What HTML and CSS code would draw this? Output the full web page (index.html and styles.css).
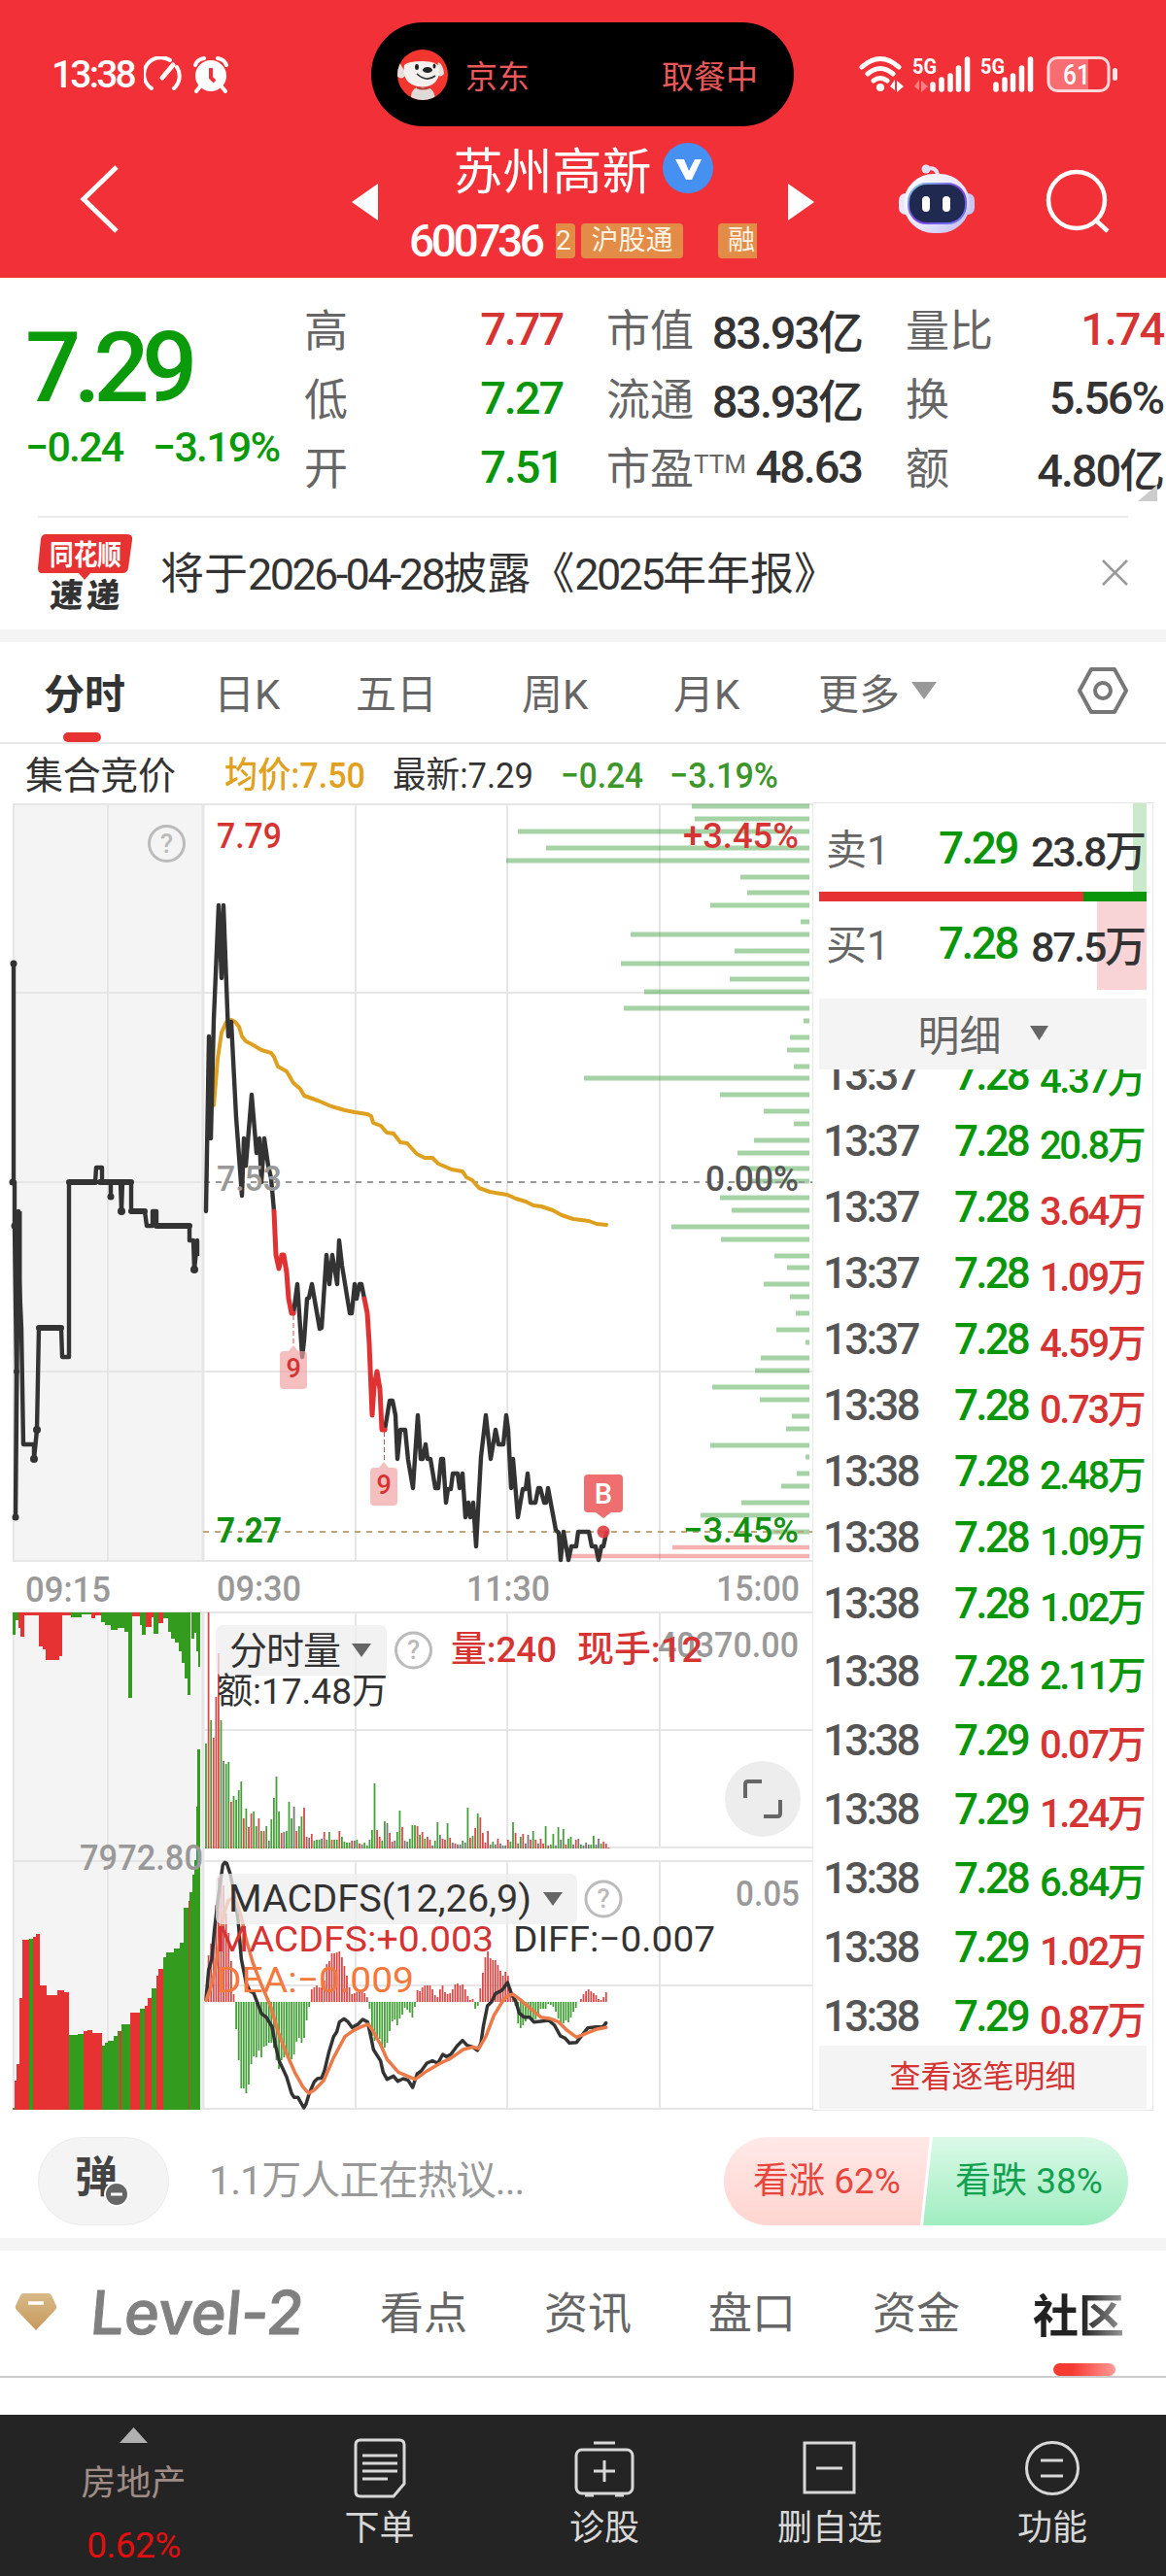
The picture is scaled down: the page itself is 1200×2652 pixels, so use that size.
FILE: index.html
```html
<!DOCTYPE html>
<html lang="zh-CN">
	<head>
		<meta charset="utf-8">
		<title>苏州高新 600736</title>
		<link rel="stylesheet" href="styles.css">
	</head>
	<body>
		<div class="header">
			<div class="status">
				<div class="status_left">
					<span class="clock">13:38</span>
					<svg width="40" height="38" viewBox="0 0 40 38" fill="none" stroke="#fff" stroke-width="4" stroke-linecap="round">
						<path d="M8 33A17 17 0 0 1 27 4M34 11a17 17 0 0 1-3 22"/>
						<path d="M19 22L30 9" stroke-width="5"/>
					</svg>
					<svg width="38" height="38" viewBox="0 0 38 38">
						<circle cx="19" cy="20" r="16" fill="#fff"/>
						<path d="M3 9q2-6 9-7M35 9q-2-6-9-7M8 31l-4 5M30 31l4 5" stroke="#fff" stroke-width="4" fill="none" stroke-linecap="round"/>
						<path d="M19 12v10l4 4" stroke="#f23038" stroke-width="4" fill="none"/>
					</svg>
				</div>
				<div class="island">
					<svg width="52" height="52" viewBox="0 0 52 52">
						<defs><clipPath id="face"><circle cx="26" cy="26" r="26"/></clipPath></defs>
						<g clip-path="url(#face)">
							<rect width="52" height="52" fill="#f2352f"/>
							<path d="M14 52q-1-10 6-13h12q8 4 6 13z" fill="#dedad6"/>
							<path d="M2 13q-5 6-2 15q6 4 9-3zM42 13q5 2 6 12q-4 5-8 0z" fill="#e5e0dc"/>
							<path d="M7 16q4-4 19-4q15 0 17 7q1 12-7 17q-10 5-21 0Q5 31 7 16z" fill="#f3f0ed"/>
							<path d="M20 39q6 3 13 0" stroke="#b33b33" stroke-width="2" fill="none"/>
							<ellipse cx="20" cy="18" rx="2" ry="3" fill="#222"/>
							<ellipse cx="38" cy="17" rx="1.5" ry="2.5" fill="#222"/>
							<ellipse cx="31" cy="21" rx="5" ry="3" fill="#222"/>
							<path d="M20 25q10 9 19 2" stroke="#333" stroke-width="1.6" fill="none"/>
						</g>
					</svg>
					<span>京东</span>
					<span class="island_right">取餐中</span>
				</div>
				<svg class="signal" width="270" height="40" viewBox="882 56 270 40">
					<g fill="none" stroke="#fff" stroke-width="5" stroke-linecap="round">
						<path d="M887 69q19-17 38 0M893 76q13-11 26 0M899 83q7-5 14 0"/>
					</g>
					<circle cx="906" cy="90" r="4" fill="#fff"/>
					<path d="M916 89l5-7v11zM923 83l7 6-7 6z" fill="#fff"/>
					<path d="M941 89l5-7v11zM948 83l7 6-7 6z" fill="#ff7f83"/>
					<g stroke="#fff" stroke-width="5.5" stroke-linecap="round">
						<path d="M960 87v5M969 82v10M978 78v14M986.500 70v22M995.500 61v31"/>
						<path d="M1025 87v5M1034 82v10M1042.500 78v14M1051.500 70v22M1060.500 61v31"/>
					</g>
					<g fill="#fff" font-family="Roboto" font-weight="700" font-size="22">
						<text x="939" y="76" textLength="25" lengthAdjust="spacingAndGlyphs">5G</text>
						<text x="1009" y="76" textLength="25" lengthAdjust="spacingAndGlyphs">5G</text>
					</g>
					<path d="M1079 67q0-8 8-8h33v35h-33q-8 0-8-8z" fill="#f76d72"/>
					<rect x="1079" y="59.500" width="62" height="34" rx="9" fill="none" stroke="#ffd9da" stroke-width="3"/>
					<rect x="1145" y="70" width="5" height="13" rx="2.500" fill="#ffe5e6"/>
					<text x="1094" y="87" fill="#fff" font-family="Roboto" font-weight="500" font-size="29" textLength="28" lengthAdjust="spacingAndGlyphs">61</text>
				</svg>
			</div>
			<div class="nav">
				<svg class="back" width="44" height="72" viewBox="0 0 44 72"><path d="M40 3L6 36L40 69" fill="none" stroke="#fff" stroke-width="5"/></svg>
				<svg width="27" height="38" viewBox="0 0 27 38"><path d="M27 0v38L0 19z" fill="#fff"/></svg>
				<div class="stock">
					<div class="stock_name">苏州高新
						<svg width="52" height="52" viewBox="0 0 52 52"><circle cx="26" cy="26" r="26" fill="#4590f0"/><path d="M13 17h9l5 12l6-12h7L30 38h-6z" fill="#fff"/></svg>
					</div>
					<div class="stock_code">
						<span class="code">600736</span>
						<span class="tags"><i class="cut">2</i><i>沪股通</i><i class="last">融</i></span>
					</div>
				</div>
				<svg width="27" height="38" viewBox="0 0 27 38"><path d="M0 0v38L27 19z" fill="#fff"/></svg>
				<svg class="robot" width="80" height="74" viewBox="0 0 80 74">
					<defs>
						<linearGradient id="shell" x1="0" y1="0" x2="1" y2="1"><stop offset="0" stop-color="#fff"/><stop offset=".6" stop-color="#e6e2fb"/><stop offset="1" stop-color="#b9b6ee"/></linearGradient>
						<linearGradient id="rim" x1="0" y1="0" x2="1" y2="1"><stop offset="0" stop-color="#7fd8e8"/><stop offset=".5" stop-color="#7a3fe0"/><stop offset="1" stop-color="#6a7cf0"/></linearGradient>
					</defs>
					<rect x="1" y="31" width="16" height="22" rx="7" fill="#e9e6fa"/>
					<rect x="63" y="31" width="16" height="22" rx="7" fill="#c9c6f2"/>
					<path d="M29 6q12-3 12 8" fill="none" stroke="#e6e2fb" stroke-width="4"/>
					<circle cx="29" cy="6" r="4.500" fill="#dfe0fa"/>
					<rect x="6" y="11" width="68" height="61" rx="31" fill="url(#shell)"/>
					<rect x="11" y="21" width="59" height="41" rx="19" fill="#20294f" stroke="url(#rim)" stroke-width="2"/>
					<rect x="25" y="34" width="8" height="16" rx="4" fill="#fff"/>
					<rect x="46" y="34" width="8" height="16" rx="4" fill="#fff"/>
				</svg>
				<svg class="search" width="66" height="66" viewBox="0 0 66 66" fill="none" stroke="#fff" stroke-width="4.500"><circle cx="32" cy="32" r="29"/><path d="M52 53l12 11"/></svg>
			</div>
		</div>

		<div class="quote">
			<div class="price_box">
				<div class="price">7.29</div>
				<div class="change"><span>−0.24</span><span>−3.19%</span></div>
			</div>
			<ul class="stats">
				<li><b>高</b><em class="red">7.77</em></li>
				<li><b>市值</b><em>83.93亿</em></li>
				<li><b>量比</b><em class="red">1.74</em></li>
				<li><b>低</b><em class="green">7.27</em></li>
				<li><b>流通</b><em>83.93亿</em></li>
				<li><b>换</b><em>5.56%</em></li>
				<li><b>开</b><em class="green">7.51</em></li>
				<li><b>市盈<sup>TTM</sup></b><em>48.63</em></li>
				<li><b>额</b><em>4.80亿</em></li>
			</ul>
		</div>

		<div class="notice">
			<svg width="98" height="80" viewBox="0 0 98 80">
				<path d="M8 0h84q6 0 5 6l-4 29q-1 5-6 5H54l-6 7-6-7H4q-4 0-4-5L3 5q1-5 5-5z" fill="#e63232"/>
				<text x="12" y="32" fill="#fff" font-family="Noto Sans CJK SC" font-weight="700" font-size="29" textLength="74" lengthAdjust="spacingAndGlyphs">同花顺</text>
				<text x="14" y="75" fill="#333" font-family="Noto Sans CJK SC" font-weight="900" font-size="34" textLength="72" transform="skewX(-4) translate(3 0)">速递</text>
			</svg>
			<p>将于<span>2026-04-28</span>披露《<span>2025</span>年年报》</p>
			<svg width="27" height="27" viewBox="0 0 27 27"><path d="M1 1l25 25M26 1L1 26" stroke="#999" stroke-width="2.500"/></svg>
		</div>

		<ul class="period">
			<li class="on">分时</li>
			<li>日K</li>
			<li>五日</li>
			<li>周K</li>
			<li>月K</li>
			<li>更多<svg width="26" height="18" viewBox="0 0 26 18"><path d="M0 0h26L13 18z" fill="#999"/></svg></li>
			<li class="setting"><svg width="54" height="50" viewBox="0 0 54 50" fill="none" stroke="#777" stroke-width="4"><path d="M15 3h24l12 22l-12 22H15L3 25z" stroke-linejoin="round"/><circle cx="27" cy="25" r="8"/></svg></li>
		</ul>

		<div class="main">
			<!-- all charts share the page x axis, y starts at 766 -->
			<svg class="charts" width="836" height="1416" viewBox="0 766 836 1416">
				<g font-size="37">
					<text x="26" y="812" textLength="155" font-size="39">集合竞价</text>
					<text x="231" y="811" textLength="145" lengthAdjust="spacingAndGlyphs" font-weight="500" fill="#e0a020">均价:7.50</text>
					<text x="404" y="811" textLength="145" lengthAdjust="spacingAndGlyphs">最新:7.29</text>
					<text x="577" y="811" textLength="85" lengthAdjust="spacingAndGlyphs" font-weight="500" fill="#3c962a">−0.24</text>
					<text x="689" y="811" textLength="112" lengthAdjust="spacingAndGlyphs" font-weight="500" fill="#3c962a">−3.19%</text>
				</g>

				<path d="M14 828h196v780H14zM14 1661h196v511H14z" fill="#f4f4f4"/>
				<g fill="none" stroke="#e6e6e6" stroke-width="2">
					<path d="M14 828H836M14 1607H836M14 827V1608M111 827V1608M366 827V1608M522 827V1608M679 827V1608M14 1022H836M14 1412H836M14 1217H210"/>
					<path d="M14 1660H836M210 1781H836M210 1902H836M14 1916H836M210 2044H836M14 2171H836M14 1660V2172M111 1660V2172"/>
					<path d="M366 1660V1902M522 1660V1902M679 1660V1902M366 1916V2172M522 1916V2172M679 1916V2172"/>
					<path d="M209 827V1608M209 1660V2172" stroke-width="3"/>
				</g>

				<path id="dist_green" fill="none" stroke="#3c9f3c" stroke-opacity=".46" stroke-width="5"/>
				<path d="M692 1593H833M583 1602H833" stroke="#e63232" stroke-opacity=".38" stroke-width="4.500"/>

				<path d="M210 1217H836" stroke="#999" stroke-width="2" stroke-dasharray="6 6"/>
				<path d="M209 1577H836" stroke="#bfa77a" stroke-width="2" stroke-dasharray="6 6"/>

				<!-- call auction -->
				<path class="auction" d="M14 992V1217H15V1262L17 1412L16 1562L19 1247V1300L22 1367L24 1487H35V1502L38 1472L40 1367H63L64 1397H71V1217H98L99 1202H105V1217H114V1232V1217H124L125 1247L126 1217H135V1247H149L151 1262H157V1247H161V1262H195V1277H199L200 1307L203 1277V1293"/>
				<path d="M71 1217H98M103 1217H135M40 1367H63M135 1247H149M161 1262H195" stroke="#333" stroke-width="6" stroke-linecap="round"/>
				<path d="M19 1247V1367" stroke="#333" stroke-width="7"/>
				<g fill="#333"><circle cx="14" cy="992" r="3.500"/><circle cx="13" cy="1217" r="3.500"/><circle cx="15" cy="1262" r="3.500"/><circle cx="17" cy="1412" r="3"/><circle cx="16" cy="1562" r="3.500"/><circle cx="35" cy="1502" r="4"/><circle cx="38" cy="1472" r="4"/><circle cx="114" cy="1232" r="3.500"/><circle cx="125" cy="1247" r="4"/><circle cx="200" cy="1307" r="4"/></g>

				<path class="line avg" d="M220 1138L224 1090L228 1063L233 1052L238 1050L242 1052L246 1057L249 1067L253 1072L259 1075L269 1081L279 1084L282 1088L286 1098L295 1103L302 1115L309 1121L313 1128L327 1133L341 1139L355 1143L365 1145L378 1147L382 1149L384 1156L392 1159L398 1166L405 1167L412 1176L419 1177L429 1188L437 1192L445 1192L451 1198L465 1204L476 1206L480 1212L486 1215L493 1223L504 1227L522 1230L531 1234L541 1237L549 1241L557 1242L569 1246L578 1251L590 1255L606 1257L614 1260L624 1261"/>
				<path class="line" d="M212 1247L215 1067L217 1172L220 1050L225 932L228 1007L230 932L235 1067L238 1052L243 1150L249 1231L251 1172L253 1200L259 1127L264 1187L267 1172L269 1217L272 1172L276 1200L279 1213L282 1247M302 1352L306 1322L311 1397L313 1380L316 1337L318 1336L321 1322L329 1368L331 1367L336 1292L339 1322L342 1292L347 1322L349 1277L352 1303L360 1352H362L365 1322L367 1337L370 1322H372L375 1337M396 1472L401 1442H404L407 1457L409 1502L412 1472H417L420 1503L425 1532L430 1457L433 1502H435L438 1487L440 1502H443L448 1532H451L454 1502H456L459 1547L461 1533H464L466 1517H471L473 1532L476 1517L479 1562L482 1547L484 1562L487 1547L490 1592L495 1500L500 1457L505 1502L510 1472L513 1487H518L521 1457L523 1472L526 1532L528 1502L533 1562L538 1533H541L543 1517L546 1547H551L554 1532H556L560 1547H562L564 1532L572 1575L575 1578L577 1606L580 1577L585 1606L588 1592H593L595 1577H606L609 1592H613L616 1606L619 1592H621L624 1578"/>
				<path class="line fall" d="M282 1247L284 1292L287 1306L290 1292H292L295 1310L297 1337L300 1352H302M375 1337L378 1352L380 1383L383 1457L385 1427L388 1412L391 1430L393 1472H396"/>

				<path d="M302 1354V1386M395.500 1474V1506" stroke="#c0545a" stroke-width="1" stroke-dasharray="5 3"/>
				<g fill="#f0a0a2" fill-opacity=".68">
					<path d="M302 1385l5 6h5q4 0 4 4v31q0 4-4 4h-20q-4 0-4-4v-31q0-4 4-4h5z"/>
					<path d="M395 1505l5 6h5q4 0 4 4v31q0 4-4 4h-20q-4 0-4-4v-31q0-4 4-4h5z"/>
				</g>
				<g fill="#d63333" font-family="Roboto" font-weight="500" font-size="27"><text x="294.500" y="1418">9</text><text x="387.500" y="1538">9</text></g>
				<path d="M605 1518h32q4 0 4 4v31q0 4-4 4h-8l-8 6l-8-6h-8q-4 0-4-4v-31q0-4 4-4z" fill="#ef6e70"/>
				<text x="621" y="1548" text-anchor="middle" font-family="Roboto" font-weight="500" font-size="29" fill="#fff">B</text>
				<circle cx="621" cy="1577" r="6.500" fill="#e03c40" fill-opacity=".9"/>

				<g font-size="37">
					<text x="223" y="873" textLength="67" lengthAdjust="spacingAndGlyphs" font-weight="500" fill="#d63333">7.79</text>
					<text x="223" y="1226" textLength="67" lengthAdjust="spacingAndGlyphs" font-weight="500" fill="#999">7.53</text>
					<text x="223" y="1588" textLength="67" lengthAdjust="spacingAndGlyphs" font-weight="700" fill="#129012">7.27</text>
					<text x="703" y="873" textLength="119" lengthAdjust="spacingAndGlyphs" font-weight="500" fill="#d63333">+3.45%</text>
					<text x="726" y="1226" textLength="96" lengthAdjust="spacingAndGlyphs" font-weight="500" fill="#555">0.00%</text>
					<text x="703" y="1588" textLength="119" lengthAdjust="spacingAndGlyphs" font-weight="500" fill="#129012">−3.45%</text>
					<g fill="#999" font-weight="500">
						<text x="26" y="1649" textLength="88" lengthAdjust="spacingAndGlyphs">09:15</text>
						<text x="223" y="1648" textLength="87" lengthAdjust="spacingAndGlyphs">09:30</text>
						<text x="480" y="1648" textLength="86" lengthAdjust="spacingAndGlyphs">11:30</text>
						<text x="737" y="1648" textLength="86" lengthAdjust="spacingAndGlyphs">15:00</text>
					</g>
				</g>
				<g class="help"><circle cx="171.500" cy="868.500" r="18"/><text x="171.500" y="878">?</text></g>

				<!-- auction volume, left column -->
				<g id="auction_top"></g>
				<g id="auction_bottom"></g>
				<g font-size="37" font-weight="500" fill="#999">
					<text x="82" y="1925" textLength="127" lengthAdjust="spacingAndGlyphs">7972.80</text>
					<text x="677" y="1706" textLength="145" lengthAdjust="spacingAndGlyphs">40370.00</text>
					<text x="757" y="1962" textLength="66" lengthAdjust="spacingAndGlyphs">0.05</text>
				</g>

				<g id="volume" stroke-width="1.800"></g>
				<g id="macd" stroke-width="1.800"></g>
				<g transform="translate(200 1820) scale(.33333)" fill="none" stroke-width="10.5" stroke-linejoin="round" stroke-linecap="round">
					<path stroke="#333" d="M36 715L44 625L54 590L62 500L75 390L88 300L94 292L100 295L110 325L120 370L135 470L145 590L160 665L172 690L183 695L200 740L208 760L222 770L240 800L250 855L262 905L285 955L300 1005L308 1018H320L338 1050L345 1038L355 1005L370 970L380 960L393 958L402 935L415 880L430 830L440 815L448 785L462 775L475 785L487 802L505 792L520 777L535 785L545 830L553 870L575 905L583 940L595 962L615 952L628 968L645 960L660 965L674 987L688 945L700 937L718 912L735 905L752 912L767 885L778 892L792 885L812 858L828 842L842 857L860 862L874 873L885 850L892 800L905 735L918 722L930 697L950 687L967 663L980 700L992 720L1003 757L1018 770H1035L1048 785L1075 782L1095 780L1112 795L1130 828L1145 835L1158 850L1180 848L1192 832L1215 803L1240 800H1262L1271 788"/>
					<path stroke="#eb7a48" d="M36 718L50 680L65 620L80 520L92 450L105 410L118 403L130 415L145 460L160 530L180 600L205 665L235 735L260 820L290 895L310 940L335 985L353 1005L370 995L400 965L430 895L465 830L490 812L515 800L537 792L550 810L575 855L595 900L630 940L660 953L682 962L720 935L760 912L790 898L830 870L860 862L878 867L900 830L925 765L955 715L970 702L985 700L1005 715L1040 745L1070 770L1100 775L1125 785L1150 810L1180 832L1210 820L1240 808L1271 802"/>
				</g>

				<g fill="#ededed" fill-opacity=".75"><rect x="222" y="1673" width="176" height="52" rx="7"/><rect x="222" y="1929" width="372" height="52" rx="7"/></g>
				<path d="M362 1692h20l-10 14zM559 1948h20l-10 14z" fill="#666"/>
				<g class="help"><circle cx="425.500" cy="1699" r="18"/><text x="425.500" y="1708">?</text><circle cx="621" cy="1955" r="18"/><text x="621" y="1964">?</text></g>
				<g font-size="37">
					<text x="236" y="1713" font-size="39" textLength="115">分时量</text>
					<text x="464" y="1711" textLength="109" lengthAdjust="spacingAndGlyphs" font-weight="500" fill="#d63333">量:240</text>
					<text x="594" y="1711" textLength="129" lengthAdjust="spacingAndGlyphs" font-weight="500" fill="#d63333">现手:12</text>
					<text x="223" y="1754" textLength="176" lengthAdjust="spacingAndGlyphs">额:17.48万</text>
					<text x="235" y="1968" font-size="38" textLength="312" lengthAdjust="spacingAndGlyphs">MACDFS(12,26,9)</text>
					<text x="222" y="2009" textLength="286" lengthAdjust="spacingAndGlyphs" fill="#d63333">MACDFS:+0.003</text>
					<text x="528" y="2009" textLength="208" lengthAdjust="spacingAndGlyphs">DIFF:−0.007</text>
					<text x="223" y="2051" textLength="203" lengthAdjust="spacingAndGlyphs" fill="#f5783c">DEA:−0.009</text>
				</g>
				<circle cx="785" cy="1852" r="39" fill="#ededed"/>
				<path d="M784 1834h-14q-3 0-3 3v14M803 1853v14q0 3-3 3h-14" fill="none" stroke="#666" stroke-width="4"/>
			</svg>

			<div class="side">
				<div class="order sell"><b>卖1</b><em class="green">7.29</em><i>23.8万</i></div>
				<div class="ratio"><span></span></div>
				<div class="order buy"><b>买1</b><em class="green">7.28</em><i>87.5万</i></div>
				<div class="side_title">明细<svg width="19" height="15" viewBox="0 0 19 15"><path d="M0 0h19L9.500 15z" fill="#666"/></svg></div>
				<ul class="ticks">
					<li><b>13:37</b><em>7.28</em><i class="green">4.37万</i></li>
					<li><b>13:37</b><em>7.28</em><i class="green">20.8万</i></li>
					<li><b>13:37</b><em>7.28</em><i class="red">3.64万</i></li>
					<li><b>13:37</b><em>7.28</em><i class="red">1.09万</i></li>
					<li><b>13:37</b><em>7.28</em><i class="red">4.59万</i></li>
					<li><b>13:38</b><em>7.28</em><i class="red">0.73万</i></li>
					<li><b>13:38</b><em>7.28</em><i class="green">2.48万</i></li>
					<li><b>13:38</b><em>7.28</em><i class="green">1.09万</i></li>
					<li><b>13:38</b><em>7.28</em><i class="green">1.02万</i></li>
					<li class="tall"><b>13:38</b><em>7.28</em><i class="green">2.11万</i></li>
					<li class="tall"><b>13:38</b><em>7.29</em><i class="red">0.07万</i></li>
					<li class="tall"><b>13:38</b><em>7.29</em><i class="red">1.24万</i></li>
					<li class="tall"><b>13:38</b><em>7.28</em><i class="green">6.84万</i></li>
					<li class="tall"><b>13:38</b><em>7.29</em><i class="red">1.02万</i></li>
					<li class="tall"><b>13:38</b><em>7.29</em><i class="red">0.87万</i></li>
				</ul>
				<div class="side_more">查看逐笔明细</div>
			</div>
		</div>

		<div class="talk">
			<div class="barrage">弹<svg width="26" height="26" viewBox="0 0 26 26"><circle cx="13" cy="13" r="12" fill="#666" stroke="#fff" stroke-width="2"/><path d="M7 13h12" stroke="#fff" stroke-width="3"/></svg></div>
			<p>1.1万人正在热议...</p>
			<div class="vote">
				<span class="up">看涨 <i>62%</i></span>
				<span class="down">看跌 <i>38%</i></span>
			</div>
		</div>

		<div class="tabs">
			<svg class="gem" width="44" height="40" viewBox="0 0 44 40"><defs><linearGradient id="gold" x1="0" y1="0" x2="0" y2="1"><stop offset="0" stop-color="#d8b988"/><stop offset="1" stop-color="#c69a5c"/></linearGradient></defs><path d="M9 1h26q2 0 3 2l5 11q1 2-1 4L22 39L2 18q-2-2-1-4L6 3q1-2 3-2z" fill="url(#gold)"/><path d="M14 11h16" stroke="#fff" stroke-width="3.500"/></svg>
			<svg class="level" width="222" height="52" viewBox="0 0 222 52"><text x="-2" y="48" textLength="219" lengthAdjust="spacingAndGlyphs" font-family="Inter" font-weight="500" font-size="62" fill="#808080" stroke="#808080" stroke-width="1" transform="translate(5 0) skewX(-5)">Level-2</text></svg>
			<ul>
				<li>看点</li>
				<li>资讯</li>
				<li>盘口</li>
				<li>资金</li>
				<li class="on">社区</li>
			</ul>
		</div>

		<div class="footer">
			<div class="plate">
				<svg width="29" height="16" viewBox="0 0 29 16"><path d="M0 16h29L14.500 0z" fill="#b0b0b0"/></svg>
				<span>房地产</span>
				<b>0.62%</b>
			</div>
			<div class="menu">
				<svg width="56" height="62" viewBox="0 0 56 62"><path d="M8 2h40q5 0 5 5v40L42 60H8q-5 0-5-5V7q0-5 5-5z"/><path d="M10 18h36M10 26h36M10 34h36M10 42h26"/></svg>
				下单
			</div>
			<div class="menu">
				<svg width="62" height="62" viewBox="0 0 62 62"><rect x="2" y="12" width="58" height="45" rx="6"/><path d="M20 5h22M31 23v22M20 34h22M11 59h9M42 59h9"/></svg>
				诊股
			</div>
			<div class="menu">
				<svg width="56" height="62" viewBox="0 0 56 62"><rect x="2" y="5" width="51" height="51"/><path d="M14 31h27"/></svg>
				删自选
			</div>
			<div class="menu">
				<svg width="58" height="62" viewBox="0 0 58 62"><circle cx="29" cy="31" r="26.500"/><path d="M17 23h23M17 39h23"/></svg>
				功能
			</div>
		</div>
		<script src="chart.js"></script>
	</body>
</html>
```

FILE: styles.css
```css
*{
	margin: 0;
	padding: 0;
	box-sizing: border-box;
	list-style: none;
	font-style: normal;
}
body{
	width: 1200px;
	height: 2652px;
	overflow: hidden;
	background: #fff;
	color: #333;
	font-family: Roboto,"Noto Sans CJK SC",sans-serif;
}
svg{
	display: block;
	flex: none;
}
.red{
	color: #d63333 !important;
}
.green{
	color: #0a960a !important;
}

/* 头部 */
.header{
	height: 286px;
	background: #f23038;
	color: #fff;
}
.status{
	height: 130px;
	padding-top: 23px;
	display: flex;
}
.status_left{
	width: 382px;
	height: 108px;
	padding-left: 53px;
	display: flex;
	align-items: center;
}
.clock{
	width: 95px;
	font-size: 39px;
	font-weight: 500;
	letter-spacing: -2.8px;
}
.status_left svg{
	margin-right: 10px;
}
.island{
	width: 435px;
	height: 107px;
	padding: 0 37px 0 27px;
	border-radius: 54px;
	background: #000;
	color: #e9585a;
	font-size: 33px;
	display: flex;
	align-items: center;
}
.island span{
	margin-left: 18px;
}
.island .island_right{
	margin-left: auto;
}
.signal{
	margin: 33px 0 0 65px;
}
.nav{
	height: 156px;
	display: flex;
}
.nav>svg{
	margin-top: 59px;
}
.nav .back{
	margin: 39px 238px 0 80px;
}
.stock{
	width: 422px;
	padding-top: 15px;
}
.stock_name{
	height: 56px;
	display: flex;
	align-items: center;
	justify-content: center;
	gap: 11px;
	font-size: 51px;
	white-space: nowrap;
}
.stock_code{
	height: 36px;
	margin-top: 29px;
	padding-left: 32px;
	display: flex;
	align-items: center;
}
.code{
	width: 151px;
	font-size: 46px;
	font-weight: 500;
	letter-spacing: -3.4px;
}
.tags{
	width: 207px;
	height: 36px;
	overflow: hidden;
	display: flex;
}
.tags i{
	flex: none;
	width: 105px;
	height: 36px;
	margin-left: 6px;
	border-radius: 4px;
	background: #e38c47;
	color: #fff3e4;
	font-size: 28px;
	line-height: 35px;
	text-align: center;
}
.tags .cut{
	width: 20px;
	margin-left: 0;
	border-radius: 0 4px 4px 0;
	text-align: left;
}
.tags .last{
	width: 60px;
	margin-left: 36px;
	padding-left: 10px;
	text-align: left;
}
.nav .robot{
	margin: 38px 0 0 86px;
}
.nav .search{
	margin: 44px 0 0 72px;
}

/* 行情 */
.quote{
	height: 245px;
	padding-top: 17px;
	display: flex;
	position: relative;
}
.quote:after{
	content: "";
	position: absolute;
	right: 9px;
	top: 213px;
	border: solid transparent;
	border-width: 0 0 17px 20px;
	border-bottom-color: #ccc;
}
.price_box{
	width: 313px;
	padding-left: 26px;
	color: #0a9a0a;
}
.price{
	height: 130px;
	padding-top: 18px;
	font-size: 101px;
	font-weight: 500;
	line-height: 116px;
	letter-spacing: -7.6px;
}
.change{
	margin-top: -3px;
	font-size: 43px;
	font-weight: 500;
	letter-spacing: -1.8px;
	line-height: 60px;
	display: flex;
	white-space: nowrap;
}
.change span:first-child{
	width: 131px;
}
.stats{
	flex: 1;
	display: grid;
	grid-template-columns: 268px 265px 267px;
	grid-auto-rows: 71px;
	column-gap: 43px;
}
.stats li{
	display: flex;
	align-items: center;
	justify-content: space-between;
	white-space: nowrap;
}
.stats b{
	margin-top: -3px;
	font-weight: 400;
	font-size: 45px;
	color: #666;
}
.stats em{
	margin-right: 2px;
	font-size: 47px;
	font-weight: 500;
	letter-spacing: -2.1px;
}
.stats sup{
	font-size: 26px;
	vertical-align: 12px;
}

/* 公告 */
.notice{
	height: 130px;
	border-bottom: 13px solid #f4f4f4;
	padding: 0 39px;
	display: flex;
	align-items: center;
	position: relative;
}
.notice:before{
	content: "";
	position: absolute;
	left: 39px;
	right: 39px;
	top: 0;
	height: 2px;
	background: #ebebeb;
}
.notice p{
	flex: 1;
	margin-top: -4px;
	padding-left: 28px;
	font-size: 45px;
}
.notice p span{
	letter-spacing: -2.6px;
}

/* 周期 */
.period{
	height: 105px;
	padding: 0 0 3px 45px;
	border-bottom: 2px solid #e8e8e8;
	display: flex;
	align-items: center;
	color: #666;
	font-size: 42px;
}
.period li{
	position: relative;
	flex: none;
	width: 175px;
	display: flex;
	align-items: center;
}
.period li:nth-child(2){
	width: 146px;
}
.period li:nth-child(3){
	width: 171px;
}
.period li:nth-child(4){
	width: 156px;
}
.period li:nth-child(5){
	width: 149px;
}
.period li:nth-child(6){
	width: 266px;
	gap: 12px;
}
.period .setting{
	width: 54px;
}
.period .on{
	color: #333;
	font-weight: 700;
}
.period .on:after{
	content: "";
	position: absolute;
	left: 20px;
	bottom: -22px;
	width: 39px;
	height: 10px;
	border-radius: 5px;
	background: #e63232;
}

/* 分时图 */
.main{
	height: 1416px;
	display: flex;
}
.charts{
	font-family: Roboto,"Noto Sans CJK SC",sans-serif;
	fill: #333;
}
.line{
	fill: none;
	stroke: #333;
	stroke-width: 4.4;
	stroke-linejoin: round;
	stroke-linecap: round;
}
.avg{
	stroke: #dea01e;
	stroke-width: 4;
}
.fall{
	stroke: #e03232;
	stroke-width: 5;
}
.auction{
	fill: none;
	stroke: #333;
	stroke-width: 4.4;
	stroke-linejoin: round;
}
.help circle{
	fill: none;
	stroke: #bbb;
	stroke-width: 3;
}
.help text{
	fill: #bbb;
	font-size: 27px;
	font-weight: 500;
	text-anchor: middle;
}
.side{
	width: 351px;
	height: 1347px;
	margin-top: 60px;
	padding: 0 6px;
	border: 1px solid #e8e8e8;
}
.order{
	height: 91px;
	padding: 1px 0 0 7px;
	display: flex;
	align-items: center;
	white-space: nowrap;
}
.order b{
	width: 116px;
	margin-top: -4px;
	color: #666;
	font-size: 42px;
	font-weight: 400;
}
.order em{
	width: 95px;
	font-size: 46px;
	font-weight: 500;
	letter-spacing: -2.6px;
}
.order i{
	font-size: 43px;
	font-weight: 500;
	letter-spacing: -2.3px;
}
.sell{
	background: linear-gradient(#cbeacb,#cbeacb) right/14px 100% no-repeat;
}
.buy{
	padding-bottom: 6px;
	background: linear-gradient(#f9d4d6,#f9d4d6) right/51px 100% no-repeat;
}
.ratio{
	height: 10px;
	background: #0a960a;
}
.ratio span{
	display: block;
	width: 272px;
	height: 10px;
	background: #e63232;
}
.side_title{
	height: 73px;
	margin-top: 9px;
	padding-bottom: 3px;
	background: #f4f4f4;
	color: #666;
	font-size: 43px;
	display: flex;
	align-items: center;
	justify-content: center;
	gap: 29px;
}
.ticks{
	height: 1005px;
	overflow: hidden;
}
.ticks li{
	height: 68px;
	padding-left: 4px;
	display: flex;
	align-items: center;
	white-space: nowrap;
}
.ticks li:first-child{
	margin-top: -28px;
}
.ticks .tall{
	height: 71px;
}
.ticks b{
	width: 135px;
	color: #555;
	font-size: 44px;
	font-weight: 500;
	letter-spacing: -2.8px;
}
.ticks em{
	width: 88px;
	color: #0a960a;
	font-size: 44px;
	font-weight: 500;
	letter-spacing: -2.8px;
}
.ticks i{
	font-size: 40px;
	font-weight: 500;
	letter-spacing: -2.4px;
	padding-top: 2px;
}
.side_more{
	height: 65px;
	background: #f4f4f4;
	color: #d63333;
	font-size: 32px;
	line-height: 65px;
	text-align: center;
}

/* 热议 */
.talk{
	height: 135px;
	padding: 18px 39px 0;
	border-bottom: 13px solid #f4f4f4;
	display: flex;
}
.barrage{
	position: relative;
	width: 135px;
	height: 91px;
	border: 1px solid #ececec;
	border-radius: 46px;
	background: #f4f4f4;
	color: #444;
	font-size: 44px;
	font-weight: 700;
	line-height: 82px;
	padding-left: 37px;
}
.barrage svg{
	position: absolute;
	left: 67px;
	top: 45px;
}
.talk p{
	flex: 1;
	padding-left: 41px;
	color: #999;
	font-size: 41px;
	letter-spacing: -.9px;
	line-height: 91px;
}
.vote{
	width: 416px;
	height: 91px;
	display: flex;
	font-size: 37px;
	line-height: 91px;
}
.vote span{
	width: 212px;
	padding-left: 30px;
}
.up{
	border-radius: 46px 0 0 46px;
	background: linear-gradient(#ffe9e8,#ffd5d0);
	color: #e8453c;
	clip-path: polygon(0 0,100% 0,202px 100%,0 100%);
}
.down{
	margin-left: -7px;
	border-radius: 0 46px 46px 0;
	background: linear-gradient(#dbf9e8,#a0edc0);
	color: #12a150;
	clip-path: polygon(10px 0,100% 0,100% 100%,0 100%);
}
.vote .down{
	width: 211px;
	padding-left: 33px;
}

/* 底部标签 */
.tabs{
	height: 131px;
	border-bottom: 2px solid #ccc;
	display: flex;
	align-items: center;
	padding-left: 15px;
	padding-bottom: 2px;
}
.level{
	margin: 0 0 0 34px;
}
.gem{
	margin-top: -2px;
}
.tabs ul{
	display: flex;
	padding-left: 76px;
	font-size: 45px;
	color: #666;
}
.tabs li{
	position: relative;
	width: 169px;
}
.tabs .on{
	width: 100px;
	margin-left: -4px;
	font-size: 47px;
	font-weight: 700;
	background: linear-gradient(90deg,#222 50%,#aaa 100%);
	-webkit-background-clip: text;
	background-clip: text;
	color: transparent;
}
.tabs .on:after{
	content: "";
	position: absolute;
	left: 21px;
	bottom: -31px;
	width: 64px;
	height: 13px;
	border-radius: 7px;
	background: linear-gradient(90deg,#f53a32 30%,#ff9a96);
}

/* 菜单栏 */
.footer{
	height: 167px;
	margin-top: 38px;
	background: #242424;
	color: #d8d8d8;
	font-size: 36px;
	display: grid;
	grid-template-columns: 275px 231px 232px 232px 226px;
}
.plate{
	display: flex;
	flex-direction: column;
	align-items: center;
	padding-top: 13px;
}
.plate span{
	margin-top: 15px;
	line-height: 54px;
	color: #a08c86;
}
.plate b{
	margin-top: 15px;
	font-size: 37px;
	font-weight: 400;
	line-height: 44px;
	letter-spacing: -.5px;
	color: #e01010;
}
.menu{
	display: flex;
	flex-direction: column;
	align-items: center;
	padding-top: 24px;
	line-height: 62px;
}
.menu svg{
	fill: none;
	stroke: #d8d8d8;
	stroke-width: 3;
}
```

FILE: chart.js
```js
var NS = "http://www.w3.org/2000/svg";
var colors = {r: "#d94a4a", g: "#46a03a", k: "#777777"};

function add(parent, tag, attrs){
	var el = document.createElementNS(NS, tag);
	for(var k in attrs){
		el.setAttribute(k, attrs[k]);
	}
	parent.appendChild(el);
}

// 价格分布: y,左端x
var dist = [[830,712],[843,715],[856,533],[873,562],[886,521],[903,762],[919,769],[932,731],[949,824],[962,649],[979,756],[992,639],[1008,751],[1021,663],[1038,642],[1051,827],[1068,813],[1081,810],[1098,817],[1110,601],[1127,741],[1144,786],[1157,817],[1174,776],[1187,759],[1203,763],[1216,772],[1233,741],[1246,753],[1263,691],[1276,742],[1293,797],[1305,810],[1322,786],[1335,813],[1352,819],[1369,799],[1382,829],[1398,783],[1411,777],[1428,733],[1441,782],[1458,815],[1471,809],[1488,731],[1500,829],[1517,820],[1530,804],[1547,763],[1560,721],[1577,792]];
document.getElementById("dist_green").setAttribute("d", dist.map(function(p){
	return "M" + p[1] + " " + p[0] + "H833";
}).join(""));

// 成交量, 每分钟一根
var vol = "108g 243r 132g 114r 156r 201r 132g 90k 87g 89g 48r 54g 50g 60g 69g 31r 41g 22r 36r 38g 23g 31r 18g 18r 23g 8k 30g 52g 74g 38g 16r 17k 18g 48g 31g 43k 18r 23g 33g 42r 12r 11k 15r 8g 9g 9g 10k 17r 9g 17g 9r 9g 9g 18r 12g 7g 6g 6g 8r 8k 9g 5r 4k 6g 3g 9g 19g 67g 19r 12r 8g 28g 26k 16r 7r 8k 17g 39g 22r 8k 7k 10g 24g 24g 23r 14g 17r 10g 12r 9r 3k 8g 27g 14k 10r 9r 26g 11r 6k 5r 4k 4k 8g 6k 42g 11r 13g 21r 36g 32r 16r 6r 18r 4k 7g 4k 10r 5k 3k 3k 9r 7g 27g 16r 5k 12g 15r 5k 14k 9r 18g 9r 5k 10r 5r 23g 3r 4g 15g 3k 22g 9k 20g 4r 10g 12g 4k 9r 10k 4g 3k 6k 4k 4g 13g 4k 10k 5g 7r 5r 1r".split(" ");
var volume = document.getElementById("volume");
vol.forEach(function(v, i){
	add(volume, "path", {
		d: "M" + (212 + i * 2.59).toFixed(1) + " 1903v-" + parseInt(v),
		stroke: colors[v.slice(-1)]
	});
});

// MACD 柱
var hist = [2,48,60,72,100,128,128,120,91,71,42,8,-28,-60,-89,-89,-94,-85,-64,-56,-57,-50,-57,-46,-45,-42,-42,-47,-60,-69,-60,-57,-55,-58,-59,-54,-41,-37,-42,-37,-19,-5,13,15,17,15,15,22,39,42,50,50,51,52,46,37,27,15,8,9,10,11,10,9,5,-7,-35,-40,-38,-38,-45,-47,-42,-30,-20,-18,-24,-17,-13,-6,-8,-11,-16,-5,12,11,15,17,17,17,13,7,5,13,17,10,8,9,13,18,19,17,18,13,6,2,3,-7,-4,14,30,46,52,45,43,43,38,32,27,31,27,14,3,-4,-22,-27,-24,-20,-15,-19,-18,-18,-12,-7,-7,-7,-2,-3,-5,-10,-17,-24,-22,-19,-21,-16,-10,-6,0,3,8,11,13,11,9,7,3,2,5,10];
var macd = document.getElementById("macd");
hist.forEach(function(v, i){
	add(macd, "path", {
		d: "M" + (212 + i * 2.59).toFixed(1) + " 2061v" + (-v),
		stroke: v > 0 ? colors.r : colors.g
	});
});

// 集合竞价: 起点x, 终点x, y, 颜色
function block(id, base, list){
	var box = document.getElementById(id);
	list.forEach(function(b){
		add(box, "rect", {
			x: b[0],
			y: Math.min(base, b[2]),
			width: b[1] - b[0],
			height: Math.abs(base - b[2]),
			fill: b[3] == "r" ? "#e63232" : "#339b1e"
		});
	});
}
block("auction_top", 1660, [
	[13,16,1683,"g"],[16,19,1668,"g"],[19,21,1676,"r"],[21,25,1685,"r"],[25,40,1663,"r"],[40,44,1695,"r"],[44,47,1698,"r"],[47,61,1709,"r"],[61,64,1705,"r"],[64,73,1663,"r"],[73,84,1665,"g"],[84,94,1662,"g"],[94,98,1666,"r"],[98,104,1663,"r"],[104,108,1670,"g"],[108,114,1673,"g"],[114,121,1678,"g"],[121,128,1676,"g"],[128,132,1680,"g"],[132,136,1748,"g"],[136,144,1664,"r"],[144,146,1673,"g"],[146,150,1683,"g"],[150,156,1675,"r"],[156,158,1665,"r"],[158,163,1682,"g"],[163,168,1671,"r"],[168,173,1666,"g"],[173,176,1680,"g"],[176,180,1687,"g"],[180,184,1691,"g"],[184,187,1700,"g"],[187,190,1712,"g"],[190,193,1728,"g"],[193,196,1745,"g"],[197,200,1687,"g"],[200,202,1681,"g"],[202,204,1700,"g"],[204,206,1716,"g"]
]);
block("auction_bottom", 2172, [
	[13,16,2170,"g"],[15,17,2142,"r"],[17,20,2125,"r"],[20,23,2057,"r"],[23,30,1997,"r"],[30,34,1996,"g"],[34,37,1994,"r"],[37,41,1991,"r"],[41,48,2044,"r"],[48,59,2054,"r"],[59,66,2049,"r"],[66,71,2051,"r"],[71,80,2095,"g"],[80,86,2094,"g"],[86,90,2091,"r"],[90,95,2090,"r"],[95,105,2093,"r"],[105,108,2106,"g"],[108,111,2103,"g"],[111,117,2101,"g"],[117,121,2096,"g"],[121,123,2091,"g"],[123,125,2091,"r"],[125,134,2084,"g"],[134,144,2072,"r"],[144,149,2068,"g"],[149,152,2065,"r"],[152,156,2057,"r"],[156,161,2047,"g"],[161,163,2034,"r"],[163,168,2027,"r"],[168,171,2015,"g"],[171,179,2010,"g"],[179,185,2006,"g"],[185,189,2000,"g"],[189,194,1964,"g"],[194,195,1957,"r"],[195,198,1948,"g"],[198,200,1930,"g"],[200,202,1915,"g"],[202,204,1860,"g"],[203,206,1801,"g"]
]);
```
